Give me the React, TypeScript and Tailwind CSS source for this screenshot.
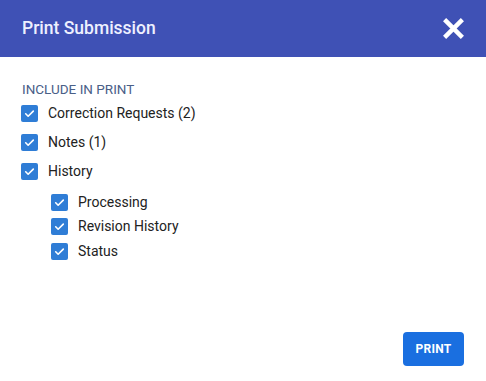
import React from 'react';

const Check = ({ label }: { label: string }) => (
  <label className="flex items-center gap-[10px] h-[29px]">
    <span className="w-[17px] h-[17px] rounded-[2px] bg-[#2f7dd6] flex items-center justify-center">
      <svg viewBox="0 0 24 24" className="w-[13px] h-[13px]" fill="none" stroke="white" strokeWidth={3} strokeLinecap="round" strokeLinejoin="round">
        <path d="M5 12.5l4.5 4.5L19 7.5" />
      </svg>
    </span>
    <span className="text-[14px] text-[#222]">{label}</span>
  </label>
);

const SubCheck = ({ label }: { label: string }) => (
  <label className="flex items-center gap-[10px] h-[24.5px]">
    <span className="w-[17px] h-[17px] rounded-[2px] bg-[#2f7dd6] flex items-center justify-center">
      <svg viewBox="0 0 24 24" className="w-[13px] h-[13px]" fill="none" stroke="white" strokeWidth={3} strokeLinecap="round" strokeLinejoin="round">
        <path d="M5 12.5l4.5 4.5L19 7.5" />
      </svg>
    </span>
    <span className="text-[14px] text-[#222]">{label}</span>
  </label>
);

export default function App() {
  return (
    <div className="w-[486px] h-[381px] bg-white flex flex-col font-['Roboto',sans-serif]">
      <div className="h-[57px] bg-[#3f51b5] flex items-center justify-between pl-[22px] pr-[22px]">
        <h1 className="text-[17.5px] font-medium text-[#eef0ff]">Print Submission</h1>
        <svg viewBox="0 0 20 20" className="w-[21px] h-[21px]" stroke="white" strokeWidth={4.2} strokeLinecap="square">
          <path d="M3 3l14 14M17 3L3 17" />
        </svg>
      </div>
      <div className="flex-1 flex flex-col px-[21px] pt-[23px]">
        <div className="text-[13.5px] text-[#4a6087] uppercase leading-[18px] pl-[1px] mb-[1px]">Include in print</div>
        <Check label="Correction Requests (2)" />
        <Check label="Notes (1)" />
        <Check label="History" />
        <div className="pl-[30px] pt-[4px]">
          <SubCheck label="Processing" />
          <SubCheck label="Revision History" />
          <SubCheck label="Status" />
        </div>
        <div className="flex-1" />
        <div className="flex justify-end pb-[15px] pr-[1px]">
          <button className="w-[61px] h-[34px] rounded-[4px] bg-[#1a6fe0] text-white text-[12px] font-bold tracking-[0.3px]">PRINT</button>
        </div>
      </div>
    </div>
  );
}
